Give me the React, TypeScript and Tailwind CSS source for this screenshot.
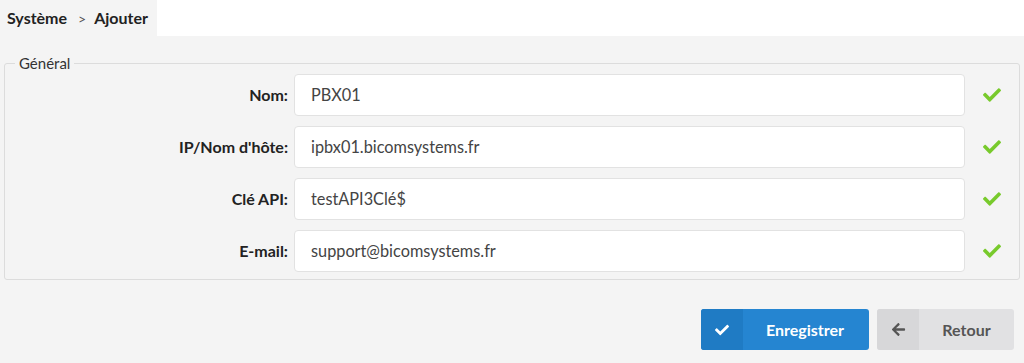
import { FaCheck, FaArrowLeft } from 'react-icons/fa';

const fields = [
  { label: 'Nom:', value: 'PBX01' },
  { label: "IP/Nom d'hôte:", value: 'ipbx01.bicomsystems.fr' },
  { label: 'Clé API:', value: 'testAPI3Clé$' },
  { label: 'E-mail:', value: 'support@bicomsystems.fr' },
];

export default function App() {
  return (
    <div className="w-[1024px] h-[363px] bg-[#f4f4f4] font-['Lato','Liberation_Sans',sans-serif] text-[#222]">
      {/* Breadcrumb */}
      <div className="flex h-9 bg-white">
        <div className="flex items-center w-[157px] bg-[#f4f4f4] pl-[7px] text-[16px] font-bold">
          <span>Système</span>
          <span className="ml-[11px] mr-[8px] text-[14px] font-normal text-[#555]">&gt;</span>
          <span>Ajouter</span>
        </div>
      </div>

      {/* Form */}
      <div className="px-1 pt-[17px]">
        <fieldset className="border border-[#dcdcdc] rounded-[3px] pb-[7px] pl-0 pr-0">
          <legend className="ml-[10px] px-[4px] text-[15px] leading-5 text-[#333]">Général</legend>
          <div className="flex flex-col gap-[10px] pt-[1px]">
            {fields.map((f) => (
              <div key={f.label} className="flex items-center">
                <label className="w-[289px] pr-[6px] text-right text-[16px] font-bold text-[#222]">{f.label}</label>
                <div className="flex items-center w-[671px] h-[42px] bg-white border border-[#e2e2e2] rounded-[4px] pl-[16px] text-[16.3px] text-[#444]">
                  {f.value}
                </div>
                <FaCheck className="ml-[18px] w-[18px] h-[18px] text-[#78ca2c]" />
              </div>
            ))}
          </div>
        </fieldset>
      </div>

      {/* Buttons */}
      <div className="flex justify-end gap-2 pt-[29px] pr-[10px]">
        <button className="flex h-[41px] w-[168px] rounded-[3px] overflow-hidden bg-[#2585d1] text-white text-[16px] font-bold">
          <span className="flex items-center justify-center w-[42px] h-full bg-[#1f7bc4]">
            <FaCheck className="w-[14px] h-[14px]" />
          </span>
          <span className="flex-1 flex items-center justify-center pr-[2px]">Enregistrer</span>
        </button>
        <button className="flex h-[41px] w-[137px] rounded-[3px] overflow-hidden bg-[#e1e1e3] text-[#555] text-[16px] font-bold">
          <span className="flex items-center justify-center w-[42px] h-full bg-[#d7d7d9]">
            <FaArrowLeft className="w-[15px] h-[15px] text-[#555]" />
          </span>
          <span className="flex-1 flex items-center justify-center">Retour</span>
        </button>
      </div>
    </div>
  );
}
